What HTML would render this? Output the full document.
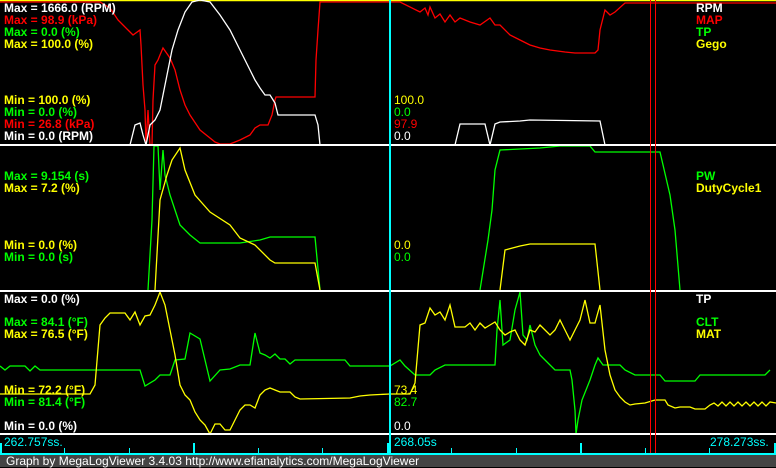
<!DOCTYPE html><html><head><style>
body{margin:0;width:776px;height:467px;background:#000;overflow:hidden;position:relative;font-family:"Liberation Sans",sans-serif}
.t{position:absolute;font-size:12px;line-height:12px;white-space:nowrap}
.b{font-weight:bold}
.w{color:#fff}.r{color:#f00}.g{color:#0f0}.y{color:#ff0}.c{color:#0ff}
</style></head><body>
<svg width="776" height="467" style="position:absolute;left:0;top:0" shape-rendering="crispEdges">
<g fill="none" stroke-width="1.3" shape-rendering="auto">
<line x1="0" y1="0.5" x2="776" y2="0.5" stroke="#ff0" stroke-width="1.5"/>
<polyline stroke="#f00" points="0,2 100,2 110,8 118,20 123,25 128,30 133,35 140,30 141,45 143,85 145,110 146,145 148,110 150,145 152,145 153,100 155,65 158,60 160,55 163,48 170,58 175,70 180,90 185,105 190,115 200,130 210,138 215,142 220,144 230,144 240,140 250,135 255,128 260,125 268,125 272,115 275,100 276,97 315,97 316,60 318,30 320,2 400,2 420,12 425,8 428,15 430,7 435,18 440,14 445,22 450,15 455,22 460,18 470,22 480,25 490,18 495,25 500,25 510,35 520,40 530,45 540,48 550,50 565,52 575,53 595,53 598,50 600,30 605,10 610,15 615,12 625,3 776,3"/>
<polyline stroke="#fff" points="130,145 135,125 140,123 143,135 146,145 150,125 155,120 160,110 163,95 167,75 172,50 178,30 185,12 192,2 200,0 210,2 220,15 230,30 240,50 250,70 255,80 260,88 265,95 270,95 275,103 278,115 315,115 318,125 320,145"/>
<polyline stroke="#fff" points="455,145 460,124 485,124 490,145 495,124 500,122 520,121 530,120 600,121 605,145"/>
<polyline stroke="#0f0" points="148,290 152,220 154,146 158,146 160,190 163,150 165,175 170,195 175,210 180,225 190,235 200,243 240,243 260,240 270,237 315,237 320,290"/>
<polyline stroke="#0f0" points="480,290 488,240 492,210 495,170 500,150 540,148 560,146 590,146 595,152 660,152 670,195 675,230 680,290"/>
<polyline stroke="#ff0" points="155,290 160,200 167,175 172,160 180,148 185,170 195,195 210,212 230,225 240,238 255,245 270,260 275,263 315,263 320,290"/>
<polyline stroke="#ff0" points="500,290 505,250 520,246 530,244 595,244 600,290"/>
<polyline stroke="#0f0" points="0,366 5,370 10,366 25,366 30,371 35,366 40,370 140,370 145,386 155,380 160,375 170,375 175,360 185,359 190,333 200,339 210,381 220,370 230,369 240,365 250,365 255,333 260,353 265,355 270,358 275,354 280,359 285,359 290,364 295,360 345,360 350,366 390,366 400,360 405,366 415,375 430,375 435,370 445,365 495,365 497,330 500,300 503,345 510,340 515,310 520,292 523,335 527,340 530,325 535,345 540,355 545,360 555,370 570,370 572,380 575,410 576,434 578,420 582,400 590,380 595,365 598,358 603,365 620,365 625,370 635,375 660,375 665,381 695,381 700,375 765,375 770,370"/>
<polyline stroke="#ff0" points="0,394 90,394 95,385 100,325 105,318 110,313 125,313 130,320 135,312 140,325 145,316 150,315 155,305 160,292 165,305 175,355 180,385 185,395 190,400 195,412 200,420 205,425 210,434 215,424 220,424 225,430 230,430 235,420 240,410 245,405 250,405 255,408 260,395 265,390 270,388 275,390 280,392 290,392 295,397 300,399 350,398 360,396 370,395 390,394 410,394 415,383 420,325 425,323 430,308 435,315 440,312 445,320 450,305 455,327 465,327 470,323 475,330 480,323 485,328 490,325 495,322 500,330 505,335 510,332 515,330 520,340 525,345 530,330 535,332 540,325 545,330 550,335 555,330 560,320 565,330 570,340 575,330 580,320 585,300 590,323 595,323 600,305 605,350 610,375 615,390 620,397 625,402 630,405 635,404 645,403 655,400 665,400 668,405 675,408 680,407 690,407 695,409 705,409 710,405 714,403 718,406 722,402 726,406 730,402 734,406 738,402 742,406 746,402 750,406 754,402 758,406 762,402 766,406 770,402 776,403"/>
</g>
<rect x="0" y="144" width="776" height="2" fill="#fff"/>
<rect x="0" y="290" width="776" height="2" fill="#fff"/>
<rect x="0" y="433" width="776" height="2" fill="#fff"/>
<rect x="389" y="0" width="2" height="455" fill="#0ff"/>
<rect x="650" y="0" width="1" height="455" fill="#f00"/>
<rect x="655" y="0" width="1" height="455" fill="#f00"/>
<rect x="0" y="453" width="776" height="2" fill="#0ff"/>
<g fill="#0ff">
<rect x="0" y="443" width="2" height="10"/><rect x="64" y="448" width="1" height="5"/><rect x="129" y="448" width="1" height="5"/><rect x="193" y="443" width="2" height="10"/><rect x="258" y="448" width="1" height="5"/><rect x="322" y="448" width="1" height="5"/><rect x="387" y="443" width="2" height="10"/><rect x="451" y="448" width="1" height="5"/><rect x="516" y="448" width="1" height="5"/><rect x="580" y="443" width="2" height="10"/><rect x="645" y="448" width="1" height="5"/><rect x="709" y="448" width="1" height="5"/><rect x="774" y="443" width="2" height="10"/>
</g>
<rect x="0" y="455" width="776" height="12" fill="#444"/>
</svg>
<div class="t b w" style="left:4px;top:2px">Max = 1666.0 (RPM)</div>
<div class="t b r" style="left:4px;top:14px">Max = 98.9 (kPa)</div>
<div class="t b g" style="left:4px;top:26px">Max = 0.0 (%)</div>
<div class="t b y" style="left:4px;top:38px">Max = 100.0 (%)</div>
<div class="t b y" style="left:4px;top:94px">Min = 100.0 (%)</div>
<div class="t b g" style="left:4px;top:106px">Min = 0.0 (%)</div>
<div class="t b r" style="left:4px;top:118px">Min = 26.8 (kPa)</div>
<div class="t b w" style="left:4px;top:130px">Min = 0.0 (RPM)</div>
<div class="t y" style="left:394px;top:94px">100.0</div>
<div class="t g" style="left:394px;top:106px">0.0</div>
<div class="t r" style="left:394px;top:118px">97.9</div>
<div class="t w" style="left:394px;top:130px">0.0</div>
<div class="t b w" style="left:696px;top:2px">RPM</div>
<div class="t b r" style="left:696px;top:14px">MAP</div>
<div class="t b g" style="left:696px;top:26px">TP</div>
<div class="t b y" style="left:696px;top:38px">Gego</div>
<div class="t b g" style="left:4px;top:170px">Max = 9.154 (s)</div>
<div class="t b y" style="left:4px;top:182px">Max = 7.2 (%)</div>
<div class="t b y" style="left:4px;top:239px">Min = 0.0 (%)</div>
<div class="t b g" style="left:4px;top:251px">Min = 0.0 (s)</div>
<div class="t y" style="left:394px;top:239px">0.0</div>
<div class="t g" style="left:394px;top:251px">0.0</div>
<div class="t b g" style="left:696px;top:170px">PW</div>
<div class="t b y" style="left:696px;top:182px">DutyCycle1</div>
<div class="t b w" style="left:4px;top:293px">Max = 0.0 (%)</div>
<div class="t b g" style="left:4px;top:316px">Max = 84.1 (°F)</div>
<div class="t b y" style="left:4px;top:328px">Max = 76.5 (°F)</div>
<div class="t b y" style="left:4px;top:384px">Min = 72.2 (°F)</div>
<div class="t b g" style="left:4px;top:396px">Min = 81.4 (°F)</div>
<div class="t b w" style="left:4px;top:420px">Min = 0.0 (%)</div>
<div class="t y" style="left:394px;top:384px">73.4</div>
<div class="t g" style="left:394px;top:396px">82.7</div>
<div class="t w" style="left:394px;top:420px">0.0</div>
<div class="t b w" style="left:696px;top:293px">TP</div>
<div class="t b g" style="left:696px;top:316px">CLT</div>
<div class="t b y" style="left:696px;top:328px">MAT</div>
<div class="t c" style="left:4px;top:436px">262.757ss.</div>
<div class="t c" style="left:394px;top:436px">268.05s</div>
<div class="t c" style="left:710px;top:436px">278.273ss.</div>
<div class="t w" style="left:6px;top:455px;color:#fff">Graph by MegaLogViewer 3.4.03 http://www.efianalytics.com/MegaLogViewer</div>
</body></html>
